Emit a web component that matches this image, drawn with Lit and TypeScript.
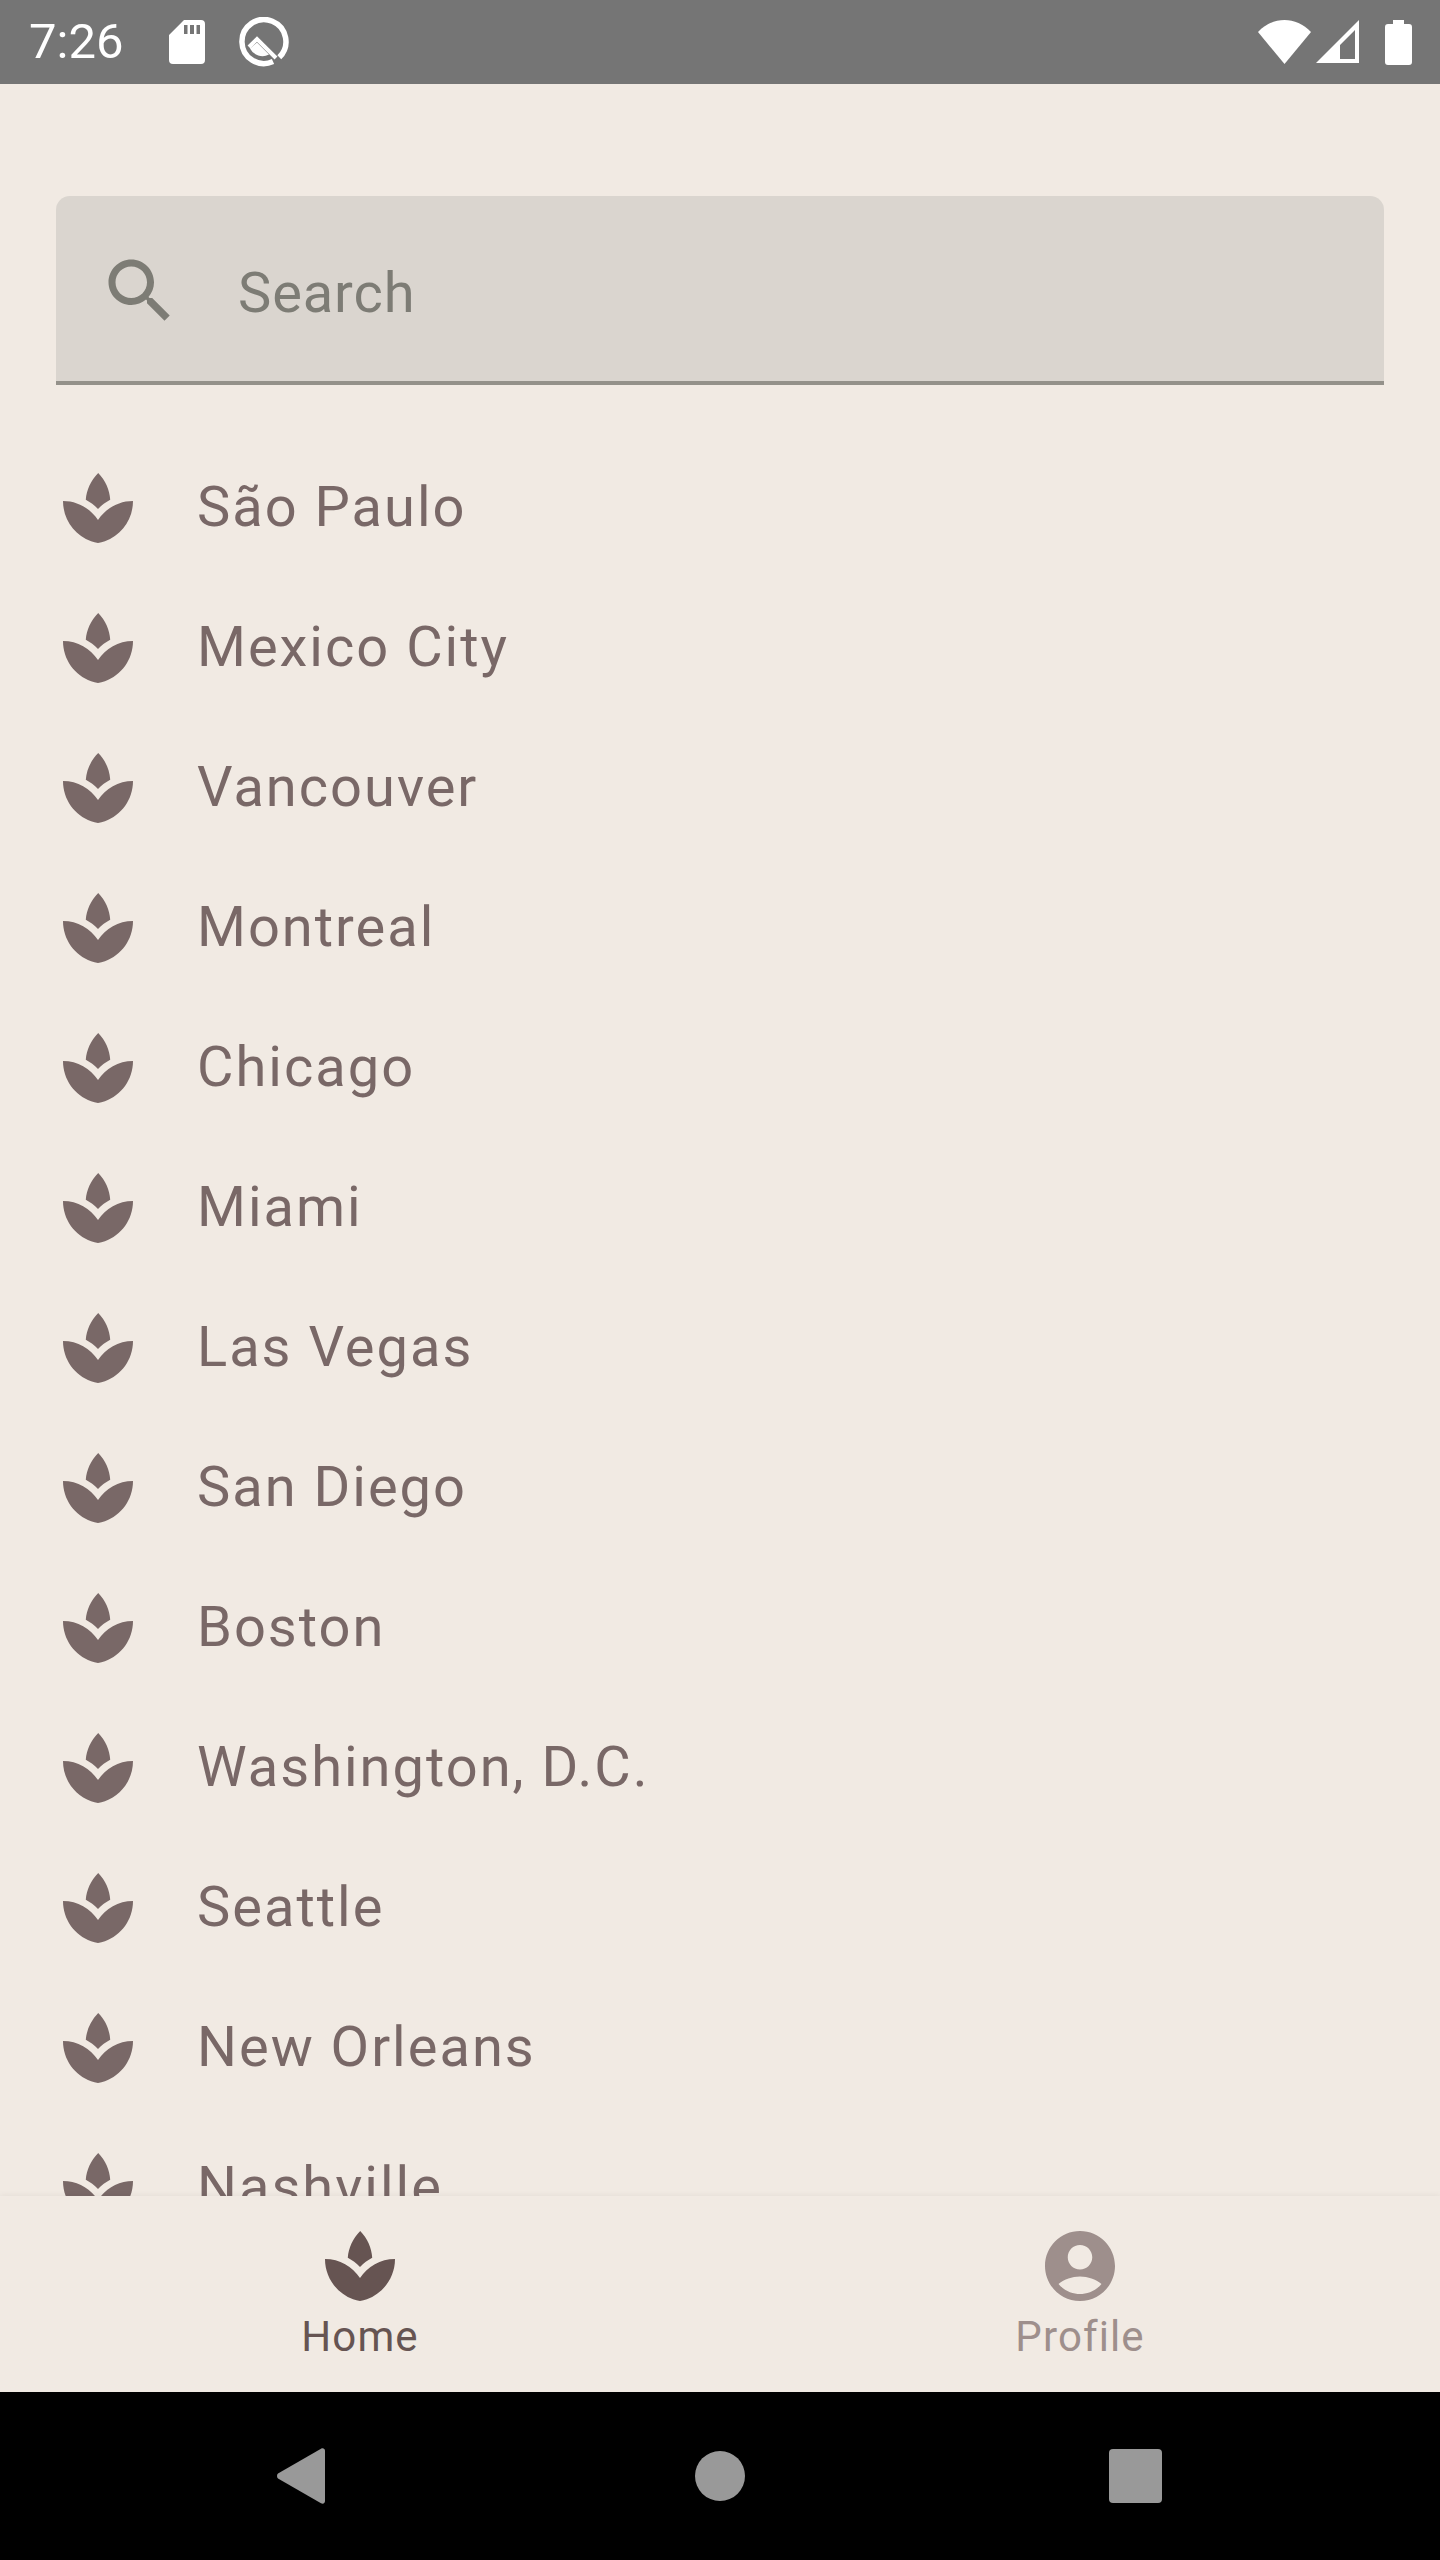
import { LitElement, html, css, svg } from 'lit';
import { customElement, state } from 'lit/decorators.js';

const SPA = svg`<path d="M15.49 9.63c-.18-2.79-1.31-5.51-3.43-7.63-2.14 2.14-3.32 4.86-3.55 7.63 1.28.68 2.46 1.56 3.49 2.63 1.03-1.06 2.21-1.94 3.49-2.63zM12 15.45C9.85 12.17 6.18 10 2 10c0 5.32 3.36 9.82 8.03 11.49.63.23 1.29.4 1.97.51.68-.12 1.33-.29 1.97-.51C18.64 19.82 22 15.32 22 10c-4.18 0-7.85 2.17-10 5.45z"/>`;
const PERSON = svg`<path fill-rule="evenodd" d="M12 2C6.48 2 2 6.48 2 12s4.48 10 10 10 10-4.48 10-10S17.52 2 12 2zm0 4c1.93 0 3.5 1.57 3.5 3.5S13.93 13 12 13s-3.5-1.57-3.5-3.5S10.07 6 12 6zm0 14c-2.03 0-4.43-.82-6.14-2.88C7.55 15.8 9.68 15 12 15s4.45.8 6.14 2.12C16.43 19.18 14.03 20 12 20z"/>`;
const SEARCH = svg`<path d="M15.5 14h-.79l-.28-.27C15.41 12.59 16 11.11 16 9.5 16 5.91 13.09 3 9.5 3S3 5.91 3 9.5 5.91 16 9.5 16c1.61 0 3.09-.59 4.23-1.57l.27.28v.79l5 4.99L20.49 19l-4.99-5zm-6 0C7.01 14 5 11.99 5 9.5S7.01 5 9.5 5 14 7.01 14 9.5 11.99 14 9.5 14z"/>`;

@customElement('app-root')
export class AppRoot extends LitElement {
  @state() cities: string[] = [
    'São Paulo', 'Mexico City', 'Vancouver', 'Montreal', 'Chicago', 'Miami', 'Las Vegas',
    'San Diego', 'Boston', 'Washington, D.C.', 'Seattle', 'New Orleans', 'Nashville',
  ];

  static styles = css`
    :host {
      display: flex;
      flex-direction: column;
      width: 1440px;
      height: 2560px;
      background: #f1eae3;
      font-family: Roboto, sans-serif;
      overflow: hidden;
    }

    .status {
      flex: none;
      height: 84px;
      background: #757575;
      color: #fff;
      display: flex;
      align-items: center;
      padding: 0 28px 0 29px;
    }
    .status svg { display: block; fill: #fff; flex: none; }
    .time { font-size: 49px; line-height: 84px; width: 140px; }
    .sd { margin-right: 34px; }
    .spacer { flex: 1; }
    .signal { margin: 0 26px 0 5px; }

    main {
      flex: 1;
      min-height: 0;
      overflow: hidden;
      padding: 112px 56px 0;
    }

    .search {
      height: 188.5px;
      box-sizing: border-box;
      background: #dad5cf;
      border-bottom: 4px solid #94918a;
      border-radius: 14px 14px 0 0;
      display: flex;
      align-items: center;
      padding: 5px 0 0 42px;
      gap: 56px;
      color: #7d7c75;
      font-size: 56px;
    }
    .search svg { width: 84px; height: 84px; fill: #7d7c75; flex: none; }
    .search span { letter-spacing: 0.9px; margin-top: 5px; }

    ul { list-style: none; margin: 53.5px 0 0; padding: 0; }
    li {
      height: 140px;
      display: flex;
      align-items: center;
      gap: 57px;
      color: #796867;
      font-size: 56px;
      letter-spacing: 2px;
    }
    li span { margin-bottom: 3px; }
    li svg { width: 84px; height: 84px; fill: #796867; flex: none; }

    .tabs {
      flex: none;
      height: 196px;
      background: #f1eae3;
      display: flex;
      box-shadow: 0 -1px 6px rgba(0, 0, 0, 0.05);
      position: relative;
    }
    .tab {
      flex: 1;
      display: flex;
      flex-direction: column;
      align-items: center;
      padding-top: 28px;
      font-size: 42px;
      line-height: 57px;
      letter-spacing: 1.1px;
      color: #9e8f8c;
    }
    .tab.on { color: #665452; }
    .tab svg { width: 84px; height: 84px; fill: currentColor; display: block; }

    .sysnav {
      flex: none;
      height: 168px;
      background: #000;
      display: grid;
      grid-template-columns: 1fr auto 1fr;
      align-items: center;
      padding: 0 278px 0 277px;
    }
    .sysnav svg { display: block; fill: #999; }
    .sysnav .recents { justify-self: end; }
  `;

  render() {
    return html`
      <div class="status">
        <span class="time">7:26</span>
        <svg class="sd" width="36" height="44" viewBox="0 0 36 44"><path fill-rule="evenodd" d="M15 0H32a4 4 0 0 1 4 4V40a4 4 0 0 1-4 4H4a4 4 0 0 1-4-4V15zM15 5V14H18.500V5zM21 5V14H25V5zM27.500 5V14H31V5z"/></svg>
        <svg width="50" height="50" viewBox="0 0 50 50">
          <path fill="none" stroke="#fff" stroke-width="5.500" d="M34 44.600A22 22 0 1 1 40.300 40.300"/>
          <path fill="none" stroke="#fff" stroke-width="4" d="M10 30L18 22L37 41"/>
          <path d="M11 31.500L18 25.500L30 37.500A14 14 0 0 1 11 31.500z"/>
        </svg>
        <span class="spacer"></span>
        <svg width="53" height="44" viewBox="0 0 53 44"><path d="M0 12C15-4 38-4 53 12L26.500 44z"/></svg>
        <svg class="signal" width="43" height="44" viewBox="0 0 43 44"><path fill-rule="evenodd" d="M43 0V43H0zM39 10L24 25V39H39z"/></svg>
        <svg width="27" height="45" viewBox="0 0 27 45"><path d="M8 0H19V4H24a3 3 0 0 1 3 3V42a3 3 0 0 1-3 3H3a3 3 0 0 1-3-3V7a3 3 0 0 1 3-3H8z"/></svg>
      </div>
      <main>
        <div class="search">
          <svg viewBox="0 0 24 24">${SEARCH}</svg>
          <span>Search</span>
        </div>
        <ul>
          ${this.cities.map(
            (city) => html`<li><svg viewBox="0 0 24 24">${SPA}</svg><span>${city}</span></li>`
          )}
        </ul>
      </main>
      <nav class="tabs">
        <div class="tab on"><svg viewBox="0 0 24 24">${SPA}</svg><span>Home</span></div>
        <div class="tab"><svg viewBox="0 0 24 24">${PERSON}</svg><span>Profile</span></div>
      </nav>
      <div class="sysnav">
        <svg width="48" height="56" viewBox="0 0 48 56"><path d="M1 25.500L44 .8C46-.3 48 .8 48 3V53C48 55.200 46 56.300 44 55.200L1 30.500C-.3 29.300-.3 26.700 1 25.500z"/></svg>
        <svg width="50" height="50" viewBox="0 0 50 50"><circle cx="25" cy="25" r="25"/></svg>
        <svg class="recents" width="53" height="54" viewBox="0 0 53 54"><rect width="53" height="54" rx="4"/></svg>
      </div>
    `;
  }
}
